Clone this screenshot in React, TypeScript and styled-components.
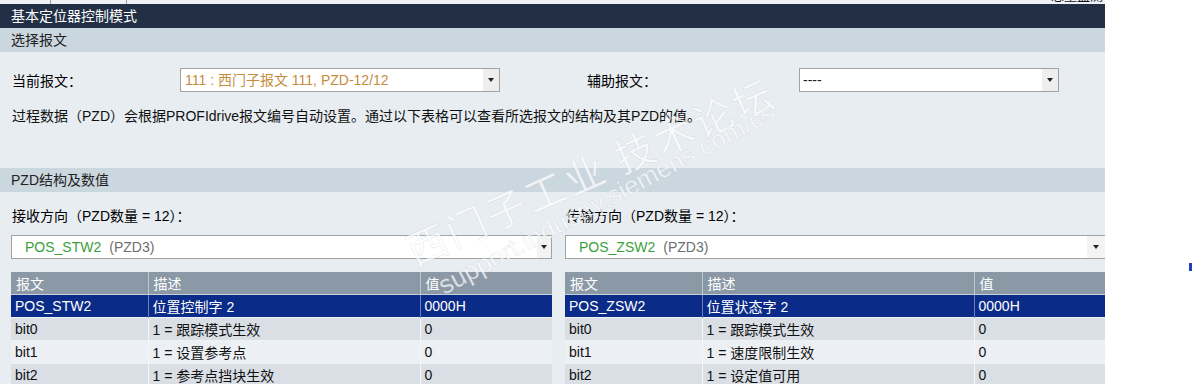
import React from 'react';
import styled, { createGlobalStyle } from 'styled-components';

const Global = createGlobalStyle`
  html, body { margin: 0; padding: 0; background: #ffffff; }
  body {
    font-family: "Liberation Sans", Arial, "Noto Sans CJK SC", sans-serif;
    font-size: 14px;
    color: #000;
  }
`;

const Page = styled.div`
  position: relative;
  width: 1192px;
  height: 384px;
  overflow: hidden;
  background: #ffffff;
`;

const Main = styled.div`
  width: 1105px;
  height: 384px;
  overflow: hidden;
  background: #e8edf2;
`;

const TopStrip = styled.div`
  height: 4px;
  background: #eef2f6;
  display: flex;
  overflow: hidden;
`;

const TopTab = styled.div<{ $w: number }>`
  flex: none;
  width: ${(p) => p.$w}px;
  border-right: 1px solid #9aa3ad;
`;

const TopText = styled.div`
  margin-left: auto;
  margin-right: 2px;
  margin-top: -11px;
  font-size: 13px;
  line-height: 14px;
  color: #111;
  white-space: nowrap;
`;

const TitleBar = styled.div`
  height: 24px;
  line-height: 24px;
  background: #222f45;
  color: #ffffff;
  padding-left: 11px;
  font-size: 14px;
`;

const SectionBar = styled.div<{ $mt?: number }>`
  height: 24px;
  line-height: 24px;
  background: #cbd7df;
  color: #222;
  padding-left: 11px;
  margin-top: ${(p) => p.$mt ?? 0}px;
`;

const FormRow = styled.div`
  display: flex;
  align-items: center;
  height: 24px;
  margin-top: 16px;
  padding-left: 12px;
`;

const Label = styled.div<{ $w: number; $ml?: number }>`
  flex: none;
  width: ${(p) => p.$w}px;
  margin-left: ${(p) => p.$ml ?? 0}px;
  white-space: nowrap;
`;

const SelectBox = styled.div<{ $w?: number }>`
  flex: none;
  box-sizing: border-box;
  width: ${(p) => (p.$w ? `${p.$w}px` : '100%')};
  height: 24px;
  border: 1px solid #a2a2a2;
  background: #ffffff;
  display: flex;
  align-items: stretch;
`;

const SelectText = styled.div<{ $pad: number; $color?: string }>`
  flex: 1;
  padding-left: ${(p) => p.$pad}px;
  line-height: 22px;
  white-space: nowrap;
  overflow: hidden;
  color: ${(p) => p.$color ?? '#222'};
`;

const ArrowBox = styled.div<{ $w: number; $bg: string }>`
  flex: none;
  width: ${(p) => p.$w}px;
  background: ${(p) => p.$bg};
  display: flex;
  align-items: center;
  justify-content: center;
  &::after {
    content: '';
    width: 0;
    height: 0;
    border-left: 3px solid transparent;
    border-right: 3px solid transparent;
    border-top: 4px solid #222;
  }
`;

const Desc = styled.div`
  margin-top: 16px;
  padding-left: 12px;
  line-height: 16px;
  color: #111;
  white-space: nowrap;
`;

const Columns = styled.div`
  display: grid;
  grid-template-columns: 541px 541px;
  column-gap: 13px;
  padding-left: 11px;
`;

const Column = styled.div`
  display: flex;
  flex-direction: column;
`;

const DirLabel = styled.div`
  margin-top: 16px;
  padding-left: 1px;
  line-height: 17px;
  white-space: nowrap;
`;

const SelGap = styled.div`
  margin-top: 10px;
`;

const Green = styled.span`
  color: #3a9f3a;
`;

const Gray = styled.span`
  color: #6e6e6e;
  margin-left: 8px;
`;

const Table = styled.table`
  margin-top: 13px;
  width: 541px;
  border-collapse: collapse;
  table-layout: fixed;
`;

const HeadCell = styled.th`
  height: 22px;
  padding: 0 0 0 5px;
  text-align: left;
  font-weight: normal;
  color: #ffffff;
  background: #8b99a6;
  border-right: 1px solid #bcc6cf;
  border-bottom: 1px solid #c8d1d9;
  white-space: nowrap;
  &:last-child { border-right: none; }
`;

const Row = styled.tr<{ $kind: 'sel' | 'dark' | 'light' }>`
  background: ${(p) => (p.$kind === 'sel' ? '#0b2b88' : p.$kind === 'dark' ? '#d9dfe5' : '#eceff3')};
  color: ${(p) => (p.$kind === 'sel' ? '#ffffff' : '#111')};
  td {
    border-right: 1px solid ${(p) => (p.$kind === 'sel' ? '#6b7fb8' : '#f4f6f8')};
    border-top: 1px solid ${(p) => (p.$kind === 'sel' ? '#0b2b88' : '#f0f3f6')};
  }
  td:last-child { border-right: none; }
`;

const Cell = styled.td`
  height: 22px;
  padding: 0 0 0 4px;
  white-space: nowrap;
  overflow: hidden;
`;

const Watermark = styled.div`
  position: absolute;
  pointer-events: none;
  white-space: nowrap;
  transform-origin: left center;
  color: rgba(255, 255, 255, 0.72);
  -webkit-text-stroke: 0.6px rgba(140, 150, 162, 0.22);
`;

const WmBig = styled(Watermark)`
  left: 408px;
  top: 226px;
  font-size: 40px;
  line-height: 50px;
  letter-spacing: 3px;
  font-family: "Noto Sans CJK SC", sans-serif;
  transform: rotate(-24deg);
`;

const WmSmall = styled(Watermark)`
  left: 440px;
  top: 272px;
  font-size: 26px;
  line-height: 30px;
  font-family: "Liberation Sans", Arial, sans-serif;
  transform: rotate(-28deg);
`;

const BlueMark = styled.div`
  position: absolute;
  left: 1189px;
  top: 263px;
  width: 3px;
  height: 8px;
  background: #1f3fc0;
`;

type R = { a: string; b: string; c: string };

const rx: R[] = [
  { a: 'POS_STW2', b: '位置控制字 2', c: '0000H' },
  { a: 'bit0', b: '1 = 跟踪模式生效', c: '0' },
  { a: 'bit1', b: '1 = 设置参考点', c: '0' },
  { a: 'bit2', b: '1 = 参考点挡块生效', c: '0' },
];

const tx: R[] = [
  { a: 'POS_ZSW2', b: '位置状态字 2', c: '0000H' },
  { a: 'bit0', b: '1 = 跟踪模式生效', c: '0' },
  { a: 'bit1', b: '1 = 速度限制生效', c: '0' },
  { a: 'bit2', b: '1 = 设定值可用', c: '0' },
];

const kinds: Array<'sel' | 'dark' | 'light'> = ['sel', 'dark', 'light', 'dark'];

function PzdTable({ rows }: { rows: R[] }) {
  return (
    <Table>
      <colgroup>
        <col style={{ width: 137 }} />
        <col style={{ width: 272 }} />
        <col />
      </colgroup>
      <thead>
        <tr>
          <HeadCell>报文</HeadCell>
          <HeadCell>描述</HeadCell>
          <HeadCell>值</HeadCell>
        </tr>
      </thead>
      <tbody>
        {rows.map((r, i) => (
          <Row key={i} $kind={kinds[i]}>
            <Cell>{r.a}</Cell>
            <Cell>{r.b}</Cell>
            <Cell>{r.c}</Cell>
          </Row>
        ))}
      </tbody>
    </Table>
  );
}

export default function App() {
  return (
    <>
      <Global />
      <Page>
        <Main>
          <TopStrip>
            <TopTab $w={50} />
            <TopTab $w={75} />
            <TopText>总量监测</TopText>
          </TopStrip>
          <TitleBar>基本定位器控制模式</TitleBar>
          <SectionBar>选择报文</SectionBar>
          <FormRow>
            <Label $w={168}>当前报文：</Label>
            <SelectBox $w={320}>
              <SelectText $pad={4} $color="#c68b3d">111 : 西门子报文 111, PZD-12/12</SelectText>
              <ArrowBox $w={16} $bg="#eeeeee" />
            </SelectBox>
            <Label $w={212} $ml={87}>辅助报文：</Label>
            <SelectBox $w={260}>
              <SelectText $pad={3}>----</SelectText>
              <ArrowBox $w={16} $bg="#eeeeee" />
            </SelectBox>
          </FormRow>
          <Desc>过程数据（PZD）会根据PROFIdrive报文编号自动设置。通过以下表格可以查看所选报文的结构及其PZD的值。</Desc>
          <SectionBar $mt={44}>PZD结构及数值</SectionBar>
          <Columns>
            <Column>
              <DirLabel>接收方向（PZD数量 = 12）：</DirLabel>
              <SelGap />
              <SelectBox>
                <SelectText $pad={13}>
                  <Green>POS_STW2</Green>
                  <Gray>(PZD3)</Gray>
                </SelectText>
                <ArrowBox $w={14} $bg="#f3f3f3" />
              </SelectBox>
              <PzdTable rows={rx} />
            </Column>
            <Column>
              <DirLabel>传输方向（PZD数量 = 12）：</DirLabel>
              <SelGap />
              <SelectBox>
                <SelectText $pad={13}>
                  <Green>POS_ZSW2</Green>
                  <Gray>(PZD3)</Gray>
                </SelectText>
                <ArrowBox $w={18} $bg="#f3f3f3" />
              </SelectBox>
              <PzdTable rows={tx} />
            </Column>
          </Columns>
        </Main>
        <WmBig>西门子工业 技术论坛</WmBig>
        <WmSmall>support.industry.siemens.com/cs</WmSmall>
        <BlueMark />
      </Page>
    </>
  );
}
